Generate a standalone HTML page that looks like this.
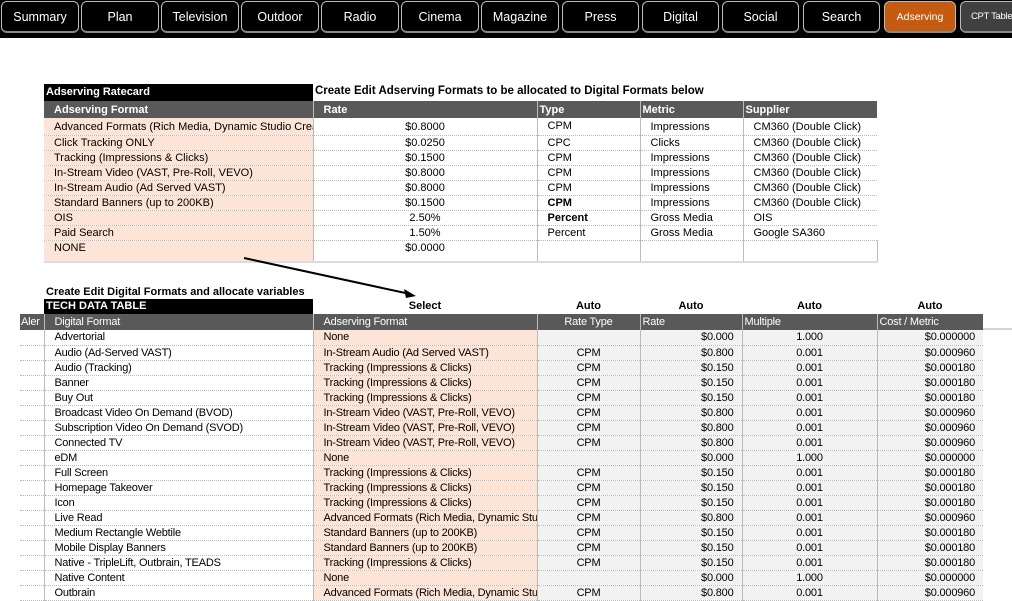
<!DOCTYPE html>
<html><head><meta charset="utf-8"><style>
*{margin:0;padding:0;box-sizing:border-box}
body{width:1012px;height:595px;overflow:hidden;background:#fff;font-family:"Liberation Sans",sans-serif;position:relative;font-size:11px;color:#000}
.bar{position:absolute;left:0;top:0;width:1012px;height:38px;background:#000}
.tab{position:absolute;top:1px;height:32px;border:1px solid #bbb;border-bottom:2px solid #888;border-radius:6px;color:#fff;font-size:12.5px;text-align:center;line-height:30px;background:#000}
.abs{position:absolute}
table{border-collapse:collapse;table-layout:fixed;position:absolute}
td{height:15px;padding:0 0 0 10px;white-space:nowrap;overflow:hidden;border-bottom:1px dotted #bbb;line-height:14px}
.hd td{background:#595959;color:#fff;font-weight:bold;border-bottom:none;height:16px}
.pk{background:#fce4d6}
.gr{background:#f2f2f2}
.c{text-align:center;padding:0}
.r{text-align:right;padding:0 8px 0 0}
.bl{border-left:1px solid #bbb}
.t2{font-size:11px;letter-spacing:-0.2px}
.t2 .hd td{font-weight:normal}
.last td{border-bottom:2px solid #ddd;height:22px;vertical-align:top}
</style></head><body>
<div class="bar"></div>
<div class="tab" style="left:1px;width:78px">Summary</div>
<div class="tab" style="left:81px;width:78px">Plan</div>
<div class="tab" style="left:161px;width:78px">Television</div>
<div class="tab" style="left:241px;width:78px">Outdoor</div>
<div class="tab" style="left:321px;width:78px">Radio</div>
<div class="tab" style="left:401px;width:78px">Cinema</div>
<div class="tab" style="left:481px;width:78px">Magazine</div>
<div class="tab" style="left:562px;width:77px">Press</div>
<div class="tab" style="left:642px;width:77px">Digital</div>
<div class="tab" style="left:722px;width:77px">Social</div>
<div class="tab" style="left:803px;width:77px">Search</div>
<div class="tab" style="left:884px;width:72px;background:#c55a11;font-size:10.5px">Adserving</div>
<div class="tab" style="left:960px;width:60px;background:#404040;font-size:9.5px;text-align:left;padding-left:10px;letter-spacing:-0.3px">CPT Table</div>

<div class="abs" style="left:44px;top:84px;width:269px;height:17px;background:#000;color:#fff;font-weight:bold;padding-left:2px;line-height:17px">Adserving Ratecard</div>
<div class="abs" style="left:315px;top:85px;font-weight:bold;font-size:11.5px">Create Edit Adserving Formats to be allocated to Digital Formats below</div>
<table style="left:44px;top:101px;width:833px">
<colgroup><col style="width:269px"><col style="width:224px"><col style="width:103px"><col style="width:103px"><col style="width:134px"></colgroup>
<tr class="hd"><td style="height:17px">Adserving Format</td><td class="bl" style="padding-left:10px">Rate</td><td class="bl" style="padding-left:2px">Type</td><td class="bl" style="padding-left:2px">Metric</td><td class="bl" style="padding-left:2px">Supplier</td></tr>
<tr><td class="pk" style="height:17px;padding-top:2px">Advanced Formats (Rich Media, Dynamic Studio Creative)</td><td class="c bl" style="padding-top:2px">$0.8000</td><td class="bl">CPM</td><td class="bl" style="padding-top:2px">Impressions</td><td class="bl" style="padding-top:2px">CM360 (Double Click)</td></tr>
<tr><td class="pk">Click Tracking ONLY</td><td class="c bl">$0.0250</td><td class="bl">CPC</td><td class="bl">Clicks</td><td class="bl">CM360 (Double Click)</td></tr>
<tr><td class="pk">Tracking (Impressions &amp; Clicks)</td><td class="c bl">$0.1500</td><td class="bl">CPM</td><td class="bl">Impressions</td><td class="bl">CM360 (Double Click)</td></tr>
<tr><td class="pk">In-Stream Video (VAST, Pre-Roll, VEVO)</td><td class="c bl">$0.8000</td><td class="bl">CPM</td><td class="bl">Impressions</td><td class="bl">CM360 (Double Click)</td></tr>
<tr><td class="pk">In-Stream Audio (Ad Served VAST)</td><td class="c bl">$0.8000</td><td class="bl">CPM</td><td class="bl">Impressions</td><td class="bl">CM360 (Double Click)</td></tr>
<tr><td class="pk">Standard Banners (up to 200KB)</td><td class="c bl">$0.1500</td><td class="bl"><b>CPM</b></td><td class="bl">Impressions</td><td class="bl">CM360 (Double Click)</td></tr>
<tr><td class="pk">OIS</td><td class="c bl">2.50%</td><td class="bl"><b>Percent</b></td><td class="bl">Gross Media</td><td class="bl">OIS</td></tr>
<tr><td class="pk">Paid Search</td><td class="c bl">1.50%</td><td class="bl">Percent</td><td class="bl">Gross Media</td><td class="bl">Google SA360</td></tr>
<tr class="last"><td class="pk">NONE</td><td class="c bl">$0.0000</td><td class="bl"></td><td class="bl"></td><td class="bl" style="border-right:1px solid #bbb"></td></tr>
</table>

<svg class="abs" style="left:0;top:0" width="1012" height="595"><line x1="244" y1="258" x2="410" y2="294" stroke="#000" stroke-width="2"/><polygon points="416,296 404,289 406,298" fill="#000"/><line x1="312" y1="329" x2="1012" y2="329" stroke="#aaa" stroke-width="1"/></svg>

<div class="abs" style="left:46px;top:286px;font-weight:bold;font-size:11px">Create Edit Digital Formats and allocate variables</div>
<div class="abs" style="left:44px;top:299px;width:269px;height:15px;background:#000;color:#fff;font-weight:bold;padding-left:2px;line-height:15px">TECH DATA TABLE</div>
<div class="abs" style="left:313px;top:300px;width:224px;text-align:center;font-weight:bold">Select</div>
<div class="abs" style="left:537px;top:300px;width:103px;text-align:center;font-weight:bold">Auto</div>
<div class="abs" style="left:640px;top:300px;width:102px;text-align:center;font-weight:bold">Auto</div>
<div class="abs" style="left:742px;top:300px;width:135px;text-align:center;font-weight:bold">Auto</div>
<div class="abs" style="left:877px;top:300px;width:106px;text-align:center;font-weight:bold">Auto</div>
<table class="t2" style="left:20px;top:314px;width:963px">
<colgroup><col style="width:24px"><col style="width:269px"><col style="width:224px"><col style="width:103px"><col style="width:102px"><col style="width:135px"><col style="width:106px"></colgroup>
<tr class="hd"><td style="padding-left:1px">Aler</td><td class="bl">Digital Format</td><td class="bl">Adserving Format</td><td class="bl c">Rate Type</td><td class="bl" style="padding-left:2px">Rate</td><td class="bl" style="padding-left:2px">Multiple</td><td class="bl" style="padding-left:2px">Cost / Metric</td></tr>
<tr><td></td><td class="bl">Advertorial</td><td class="pk bl">None</td><td class="gr bl c"></td><td class="gr bl r">$0.000</td><td class="gr bl c">1.000</td><td class="gr bl r">$0.000000</td></tr>
<tr><td></td><td class="bl">Audio (Ad-Served VAST)</td><td class="pk bl">In-Stream Audio (Ad Served VAST)</td><td class="gr bl c">CPM</td><td class="gr bl r">$0.800</td><td class="gr bl c">0.001</td><td class="gr bl r">$0.000960</td></tr>
<tr><td></td><td class="bl">Audio (Tracking)</td><td class="pk bl">Tracking (Impressions &amp; Clicks)</td><td class="gr bl c">CPM</td><td class="gr bl r">$0.150</td><td class="gr bl c">0.001</td><td class="gr bl r">$0.000180</td></tr>
<tr><td></td><td class="bl">Banner</td><td class="pk bl">Tracking (Impressions &amp; Clicks)</td><td class="gr bl c">CPM</td><td class="gr bl r">$0.150</td><td class="gr bl c">0.001</td><td class="gr bl r">$0.000180</td></tr>
<tr><td></td><td class="bl">Buy Out</td><td class="pk bl">Tracking (Impressions &amp; Clicks)</td><td class="gr bl c">CPM</td><td class="gr bl r">$0.150</td><td class="gr bl c">0.001</td><td class="gr bl r">$0.000180</td></tr>
<tr><td></td><td class="bl">Broadcast Video On Demand (BVOD)</td><td class="pk bl">In-Stream Video (VAST, Pre-Roll, VEVO)</td><td class="gr bl c">CPM</td><td class="gr bl r">$0.800</td><td class="gr bl c">0.001</td><td class="gr bl r">$0.000960</td></tr>
<tr><td></td><td class="bl">Subscription Video On Demand (SVOD)</td><td class="pk bl">In-Stream Video (VAST, Pre-Roll, VEVO)</td><td class="gr bl c">CPM</td><td class="gr bl r">$0.800</td><td class="gr bl c">0.001</td><td class="gr bl r">$0.000960</td></tr>
<tr><td></td><td class="bl">Connected TV</td><td class="pk bl">In-Stream Video (VAST, Pre-Roll, VEVO)</td><td class="gr bl c">CPM</td><td class="gr bl r">$0.800</td><td class="gr bl c">0.001</td><td class="gr bl r">$0.000960</td></tr>
<tr><td></td><td class="bl">eDM</td><td class="pk bl">None</td><td class="gr bl c"></td><td class="gr bl r">$0.000</td><td class="gr bl c">1.000</td><td class="gr bl r">$0.000000</td></tr>
<tr><td></td><td class="bl">Full Screen</td><td class="pk bl">Tracking (Impressions &amp; Clicks)</td><td class="gr bl c">CPM</td><td class="gr bl r">$0.150</td><td class="gr bl c">0.001</td><td class="gr bl r">$0.000180</td></tr>
<tr><td></td><td class="bl">Homepage Takeover</td><td class="pk bl">Tracking (Impressions &amp; Clicks)</td><td class="gr bl c">CPM</td><td class="gr bl r">$0.150</td><td class="gr bl c">0.001</td><td class="gr bl r">$0.000180</td></tr>
<tr><td></td><td class="bl">Icon</td><td class="pk bl">Tracking (Impressions &amp; Clicks)</td><td class="gr bl c">CPM</td><td class="gr bl r">$0.150</td><td class="gr bl c">0.001</td><td class="gr bl r">$0.000180</td></tr>
<tr><td></td><td class="bl">Live Read</td><td class="pk bl">Advanced Formats (Rich Media, Dynamic Studio)</td><td class="gr bl c">CPM</td><td class="gr bl r">$0.800</td><td class="gr bl c">0.001</td><td class="gr bl r">$0.000960</td></tr>
<tr><td></td><td class="bl">Medium Rectangle Webtile</td><td class="pk bl">Standard Banners (up to 200KB)</td><td class="gr bl c">CPM</td><td class="gr bl r">$0.150</td><td class="gr bl c">0.001</td><td class="gr bl r">$0.000180</td></tr>
<tr><td></td><td class="bl">Mobile Display Banners</td><td class="pk bl">Standard Banners (up to 200KB)</td><td class="gr bl c">CPM</td><td class="gr bl r">$0.150</td><td class="gr bl c">0.001</td><td class="gr bl r">$0.000180</td></tr>
<tr><td></td><td class="bl">Native - TripleLift, Outbrain, TEADS</td><td class="pk bl">Tracking (Impressions &amp; Clicks)</td><td class="gr bl c">CPM</td><td class="gr bl r">$0.150</td><td class="gr bl c">0.001</td><td class="gr bl r">$0.000180</td></tr>
<tr><td></td><td class="bl">Native Content</td><td class="pk bl">None</td><td class="gr bl c"></td><td class="gr bl r">$0.000</td><td class="gr bl c">1.000</td><td class="gr bl r">$0.000000</td></tr>
<tr><td></td><td class="bl">Outbrain</td><td class="pk bl">Advanced Formats (Rich Media, Dynamic Studio)</td><td class="gr bl c">CPM</td><td class="gr bl r">$0.800</td><td class="gr bl c">0.001</td><td class="gr bl r">$0.000960</td></tr>
</table>
</body></html>
